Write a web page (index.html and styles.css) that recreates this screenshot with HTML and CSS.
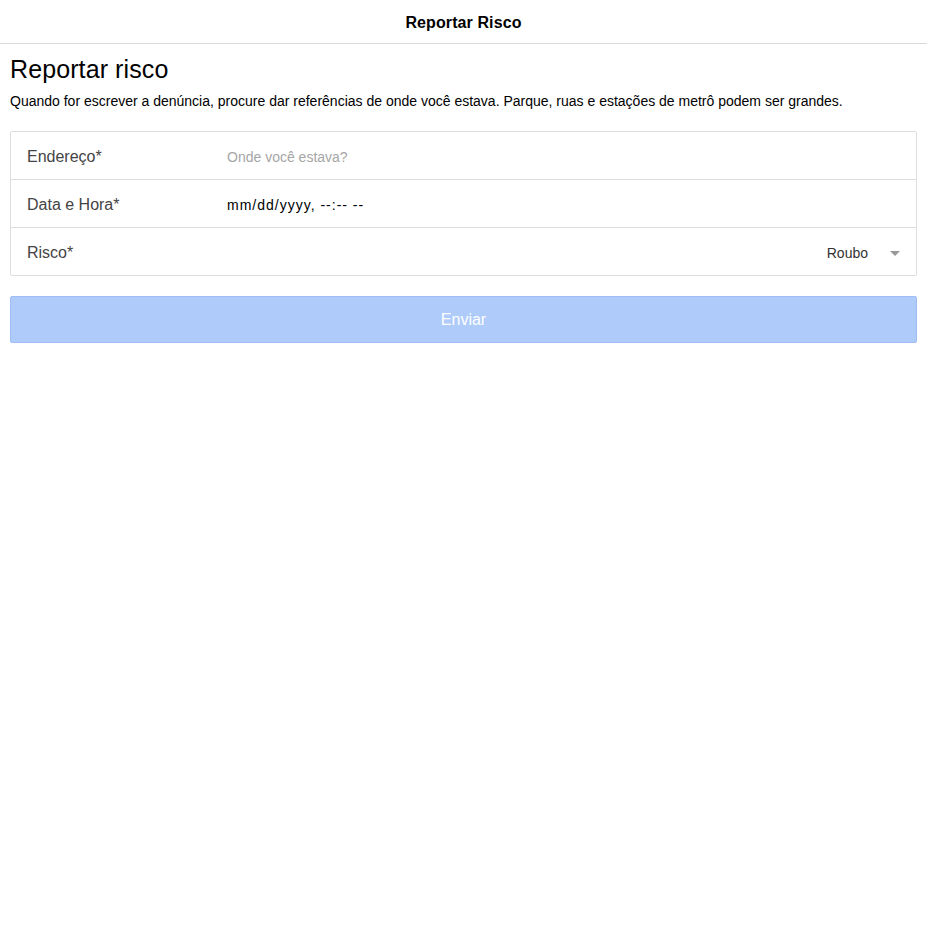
FILE: index.html
```html
<!DOCTYPE html>
<html lang="pt">
<head>
<meta charset="utf-8">
<title>Reportar Risco</title>
<link rel="stylesheet" href="styles.css">
</head>
<body>
<header class="toolbar"><div class="toolbar-title">Reportar Risco</div></header>
<main class="content">
  <h2 class="page-title">Reportar risco</h2>
  <p class="intro">Quando for escrever a denúncia, procure dar referências de onde você estava. Parque, ruas e estações de metrô podem ser grandes.</p>
  <div class="list">
    <div class="item">
      <div class="label">Endereço*</div>
      <div class="value placeholder">Onde você estava?</div>
    </div>
    <div class="item">
      <div class="label">Data e Hora*</div>
      <div class="value datetime">mm/dd/yyyy, --:-- --</div>
    </div>
    <div class="item">
      <div class="label">Risco*</div>
      <div class="select">
        <span class="select-text">Roubo</span>
        <span class="select-icon"></span>
      </div>
    </div>
  </div>
  <button class="btn" disabled>Enviar</button>
</main>
</body>
</html>
```
FILE: styles.css
```css
* { box-sizing: border-box; }
html, body { margin: 0; padding: 0; background: #fff; }
body { font-family: "Liberation Sans", Arial, sans-serif; color: #000; }
.toolbar {
  height: 44px;
  border-bottom: 1px solid #d9d9d9;
  display: flex;
  align-items: center;
  justify-content: center;
}
.toolbar-title { font-size: 16px; font-weight: 700; color: #000; padding-top: 2px; letter-spacing: 0.1px; }
.content { padding: 0 10px; }
.page-title { margin: 11px 0 0 0; font-size: 25px; font-weight: 400; line-height: 28px; letter-spacing: 0.1px; }
.intro { margin: 9px 0 0 0; font-size: 14px; line-height: 18px; }
.list {
  margin-top: 21px;
  border: 1px solid #dedede;
  border-radius: 2px;
}
.item {
  height: 48px;
  display: flex;
  align-items: center;
  padding-left: 16px;
  padding-top: 3px;
  border-bottom: 1px solid #dedede;
}
.item:last-child { border-bottom: none; height: 47px; }
.label { width: 200px; font-size: 16px; color: #444; }
.value { font-size: 14px; }
.placeholder { color: #a6a6a6; }
.datetime { color: #000; font-size: 14px; letter-spacing: 1px; }
.select { margin-left: auto; display: flex; align-items: center; padding-right: 16px; }
.select-text { font-size: 14px; color: #333; }
.select-icon {
  margin-left: 22px;
  width: 0; height: 0;
  border-left: 5px solid transparent;
  border-right: 5px solid transparent;
  border-top: 5px solid #999;
}
.btn {
  margin-top: 20px;
  width: 100%;
  height: 47px;
  padding-top: 2px;
  background: #aecbfa;
  border: 1px solid #9fbdf5;
  border-radius: 2px;
  color: #fff;
  font-family: "Liberation Sans", Arial, sans-serif;
  font-size: 16px;
}
```
